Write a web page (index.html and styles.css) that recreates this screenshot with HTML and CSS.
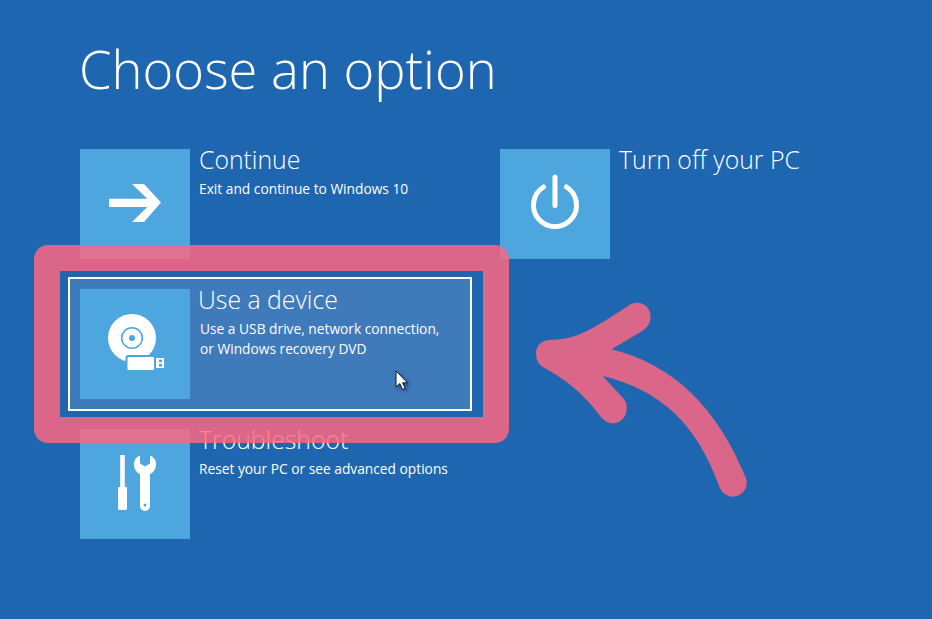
FILE: index.html
```html
<!DOCTYPE html>
<html lang="en">
<head>
<meta charset="utf-8">
<title>Choose an option</title>
<link rel="stylesheet" href="styles.css">
</head>
<body>
<main class="screen">
  <h1 class="heading">Choose an option</h1>
  <div class="options">
    <div class="option">
      <svg class="tile" viewBox="0 0 110 110"><path class="glyph" d="M52 35H64L81 53.5 64 73H52L67.3 58H29V49.7H67.3Z"/></svg>
      <div class="copy">
        <div class="name">Continue</div>
        <div class="desc">Exit and continue to Windows 10</div>
      </div>
    </div>
    <div class="option">
      <svg class="tile" viewBox="0 0 110 110">
        <path class="line" d="M43.5 38A21.5 21.5 0 1 0 66.5 38"/>
        <path class="line" d="M55 28V56.5"/>
      </svg>
      <div class="copy">
        <div class="name">Turn off your PC</div>
      </div>
    </div>
    <div class="option option-selected">
      <svg class="tile" viewBox="0 0 110 110">
        <circle class="glyph" cx="52" cy="49" r="24"/>
        <circle class="ring" cx="52" cy="49" r="10.3"/>
        <circle class="hole" cx="52" cy="49" r="3"/>
        <rect class="usb" x="46.5" y="67" width="28.5" height="15" rx="2"/>
        <rect class="glyph" x="76" y="69" width="8" height="10"/>
        <rect class="hole" x="79" y="70.7" width="3" height="2.6"/>
        <rect class="hole" x="79" y="75" width="3" height="2.6"/>
      </svg>
      <div class="copy">
        <div class="name name-selected">Use a device</div>
        <div class="desc desc-selected">Use a USB drive, network connection,<br>or Windows recovery DVD</div>
      </div>
    </div>
    <div class="option-empty"></div>
    <div class="option">
      <svg class="tile" viewBox="0 0 110 110">
        <path class="glyph" d="M40.200 26H44.800V58H46A1 1 0 0 1 47 59V79.500A1.500 1.500 0 0 1 45.500 81H39.500A1.500 1.500 0 0 1 38 79.500V59A1 1 0 0 1 39 58H40.200Z"/>
        <path class="glyph" d="M60 26.500V34.500L65 37.500 70 34.500V26.500C74 28 76 31.500 76 35.500 76 40 73.500 43.500 70 45.300V77A5 5 0 0 1 60 77V45.300C56.500 43.500 54 40 54 35.500 54 31.500 56 28 60 26.500Z"/>
        <circle class="hole" cx="65" cy="76" r="1.500"/>
      </svg>
      <div class="copy">
        <div class="name">Troubleshoot</div>
        <div class="desc">Reset your PC or see advanced options</div>
      </div>
    </div>
  </div>
</main>
<div class="highlight"></div>
<svg class="pointer-arrow" viewBox="0 0 720 630"><path d="M48 190C48 165 68 150 88 150 120 149 150 145 180 132 230 110 275 80 320 50 332 41 340 38 352 38 375 38 392 58 392 80 392 98 382 112 368 122L275 178C460 225 590 350 678 565 680 570 680 575 680 580 680 602 660 620 640 620 620 620 605 607 598 590 530 400 420 300 248 258L310 325C318 335 322 348 320 360 318 382 300 400 280 400 262 400 250 390 240 378 220 350 190 318 160 292 130 268 100 248 70 232 55 224 48 208 48 190Z"/></svg>
<svg class="cursor" viewBox="0 0 16 22"><path d="M1 1V17L4.800 13.500 7.500 19.500 10.200 18.300 7.600 12.800H12.500Z"/></svg>
</body>
</html>
```
FILE: styles.css
```css
html, body {
  margin: 0;
  height: 100%;
  overflow: hidden;
}

body {
  position: relative;
  background: #1f66b1;
  color: #fff;
  font-family: "Open Sans", "Liberation Sans", sans-serif;
}

.screen {
  padding: 0 0 0 79px;
}

.heading {
  margin: 0;
  height: 149px;
  box-sizing: border-box;
  padding-top: 33px;
  font-size: 52.500px;
  line-height: 72px;
  font-weight: 300;
}

.options {
  display: grid;
  grid-template-columns: 420px 420px;
  grid-auto-rows: 110px;
  row-gap: 30px;
  margin-left: 1px;
}

.option {
  position: relative;
  display: flex;
  gap: 9px;
  width: 380px;
}

.option-selected::before {
  content: "";
  position: absolute;
  inset: -12px;
  border: 2px solid #fff;
  background: #3f7abb;
}

.tile {
  position: relative;
  flex: none;
  width: 110px;
  height: 110px;
  background: #4da6dd;
}

.copy {
  position: relative;
  min-width: 0;
}

.name {
  margin-top: -4px;
  font-size: 24.800px;
  line-height: 28px;
  font-weight: 300;
  white-space: nowrap;
}

.name-selected {
  margin-left: -1px;
}

.desc {
  margin-top: 6px;
  font-size: 13.750px;
  line-height: 20px;
  white-space: nowrap;
}

.desc-selected {
  margin-left: 1px;
}

.glyph {
  fill: #fff;
}

.line {
  fill: none;
  stroke: #fff;
  stroke-width: 5;
  stroke-linecap: round;
}

.ring {
  fill: none;
  stroke: #4da6dd;
  stroke-width: 1.500;
}

.hole {
  fill: #4da6dd;
}

.usb {
  fill: #fff;
  stroke: #4da6dd;
  stroke-width: 2;
}

.highlight {
  position: absolute;
  left: 34px;
  top: 245px;
  width: 475px;
  height: 198px;
  box-sizing: border-box;
  border: 26px solid rgba(255, 103, 129, 0.835);
  border-radius: 14px;
}

.pointer-arrow {
  position: absolute;
  left: 520px;
  top: 290px;
  width: 240px;
  height: 210px;
}

.pointer-arrow path {
  fill: #da6789;
}

.cursor {
  position: absolute;
  left: 395px;
  top: 370px;
  width: 16px;
  height: 22px;
  filter: drop-shadow(2px 2px 2px rgba(0, 20, 60, 0.45));
}

.cursor path {
  fill: #fff;
  stroke: #0a1a30;
  stroke-width: 1;
}
```
